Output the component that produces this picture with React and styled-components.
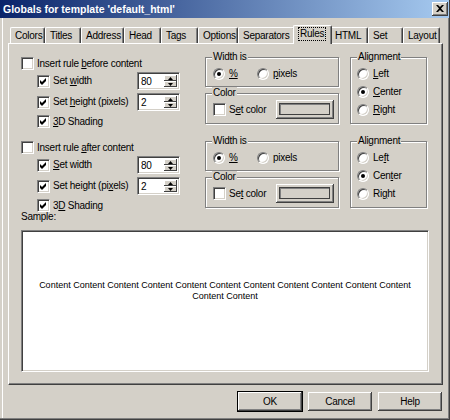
import styled, { createGlobalStyle } from 'styled-components'

const GlobalStyle = createGlobalStyle`
  html, body {
    margin: 0;
    padding: 0;
    background: #D4D0C8;
  }
`

const Window = styled.div`
  width: 450px;
  height: 420px;
  box-sizing: border-box;
  background: #D4D0C8;
  border-right: 1px solid #404040;
  border-bottom: 1px solid #404040;
  box-shadow: inset -1px -1px 0 #808080, inset 2px 0 0 #D4D0C8, inset 3px 0 0 #fff;
  display: flex;
  flex-direction: column;
  font-family: "Liberation Sans", Arial, sans-serif;
  font-size: 10px;
  letter-spacing: -0.25px;
  color: #000;
  overflow: hidden;
`

const TitleBar = styled.div`
  height: 18px;
  flex: none;
  display: flex;
  align-items: center;
  justify-content: space-between;
  padding: 0 1px 0 3px;
  background: linear-gradient(to right, #0A246A, #A6CAF0);
`

const Title = styled.span`
  color: #fff;
  font-weight: bold;
  font-size: 10.5px;
  letter-spacing: 0;
  white-space: nowrap;
`

const CloseButton = styled.div`
  width: 16px;
  height: 14px;
  box-sizing: border-box;
  background: #D4D0C8;
  box-shadow: inset -1px -1px #404040, inset 1px 1px #fff, inset -2px -2px #808080;
  display: flex;
  align-items: center;
  justify-content: center;
  padding-bottom: 1px;
`

const Body = styled.div`
  flex: 1;
  display: flex;
  flex-direction: column;
  padding: 7px 0 0 8px;
`

const TabStrip = styled.div`
  height: 18px;
  display: flex;
  align-items: flex-end;
  padding-left: 2px;
  position: relative;
  z-index: 1;
`

const Tab = styled.div`
  position: relative;
  z-index: ${p => (p.$active ? 2 : 1)};
  box-sizing: border-box;
  width: ${p => p.$width + (p.$active ? 4 : 0)}px;
  height: ${p => (p.$active ? 19 : 16)}px;
  margin: ${p => (p.$active ? '0 -2px -1px' : '0')};
  padding-left: ${p => (p.$active ? 5 : 4)}px;
  padding-bottom: ${p => (p.$active ? 2 : 0)}px;
  background: #D4D0C8;
  border-top: 1px solid #fff;
  border-left: 1px solid #fff;
  border-right: 1px solid #404040;
  border-radius: 2px 2px 0 0;
  box-shadow: inset -1px 0 0 #808080;
  display: flex;
  align-items: center;
  white-space: nowrap;
`

const FocusLabel = styled.span`
  outline: 1px dotted #000;
  padding: 0 1px;
  line-height: 12px;
`

const Panel = styled.div`
  box-sizing: border-box;
  width: 435px;
  height: 342px;
  border-top: 1px solid #fff;
  border-left: 1px solid #fff;
  border-right: 1px solid #404040;
  border-bottom: 1px solid #404040;
  box-shadow: inset -1px -1px #808080;
  padding: 13px 0 0 12px;
  display: flex;
  flex-direction: column;
`

const RuleSection = styled.div`
  display: flex;
  gap: 11px;
  height: 67px;
  margin-top: ${p => p.$top}px;
`

const LeftCol = styled.div`
  width: 173px;
  display: flex;
  flex-direction: column;
`

const MidCol = styled.div`
  width: 134px;
  display: flex;
  flex-direction: column;
  gap: 6px;
`

const SpinRow = styled.div`
  display: grid;
  grid-template-columns: 100px 43px;
  align-items: center;
  height: 18px;
  padding-left: 16px;
  margin-top: ${p => p.$top}px;
`

const IndentRow = styled.div`
  padding-left: 16px;
  margin-top: ${p => p.$top}px;
`

const OptionLabel = styled.label`
  display: flex;
  align-items: center;
  gap: ${p => p.$gap}px;
  height: 13px;
  white-space: nowrap;
  line-height: 12px;
`

const LabelText = styled.span`
  white-space: nowrap;
`

const CheckBox = styled.span`
  width: 13px;
  height: 13px;
  flex: none;
  box-sizing: border-box;
  background: #fff;
  border: 1px solid;
  border-color: #808080 #fff #fff #808080;
  box-shadow: inset 1px 1px #404040, inset -1px -1px #D4D0C8;
  display: flex;
  align-items: center;
  justify-content: center;
`

const RadioCircle = styled.span`
  width: 12px;
  height: 12px;
  flex: none;
  box-sizing: border-box;
  border-radius: 50%;
  background: #fff;
  border: 1px solid;
  border-color: #808080 #fff #fff #808080;
  box-shadow: inset 1px 1px #404040, inset -1px -1px #D4D0C8;
  display: flex;
  align-items: center;
  justify-content: center;
`

const RadioDot = styled.span`
  width: 4px;
  height: 4px;
  border-radius: 50%;
  background: #000;
`

const GroupBox = styled.div`
  position: relative;
  box-sizing: border-box;
  height: ${p => p.$height}px;
  width: ${p => p.$width}px;
  border: 1px solid #808080;
  box-shadow: inset 1px 1px #fff, 1px 1px #fff;
  padding: ${p => p.$pad};
`

const Legend = styled.span`
  position: absolute;
  top: -7px;
  left: 6px;
  padding: 0 1px;
  line-height: 12px;
  background: #D4D0C8;
  white-space: nowrap;
`

const RadioPair = styled.div`
  display: grid;
  grid-template-columns: 44px auto;
  align-items: center;
`

const ColorRow = styled.div`
  display: flex;
  align-items: center;
  justify-content: space-between;
`

const ColorButton = styled.div`
  width: 58px;
  height: 19px;
  box-sizing: border-box;
  padding: 3px 4px 4px 3px;
  background: #D4D0C8;
  box-shadow: inset -1px -1px #404040, inset 1px 1px #fff, inset -2px -2px #808080;
  display: flex;
`

const Swatch = styled.div`
  flex: 1;
  border: 1px solid #404040;
  box-shadow: inset 1px 1px #808080;
  background: #D4D0C8;
`

const AlignList = styled.div`
  display: flex;
  flex-direction: column;
`

const AlignItem = styled.div`
  height: 18px;
  display: flex;
  align-items: center;
`

const SpinBox = styled.div`
  width: 43px;
  height: 18px;
  box-sizing: border-box;
  display: flex;
  padding: 2px;
  background: #fff;
  border: 1px solid;
  border-color: #808080 #fff #fff #808080;
  box-shadow: inset 1px 1px #404040, inset -1px -1px #D4D0C8;
`

const SpinValue = styled.span`
  flex: 1;
  padding-left: 1px;
  line-height: 13px;
`

const SpinButtons = styled.div`
  width: 13px;
  display: flex;
  flex-direction: column;
`

const SpinArrow = styled.div`
  flex: 1;
  background: #D4D0C8;
  box-shadow: inset -1px -1px #404040, inset 1px 1px #fff;
  display: flex;
  align-items: center;
  justify-content: center;
`

const SampleLabel = styled.div`
  margin-top: 3px;
  line-height: 12px;
  height: 12px;
`

const SampleBox = styled.div`
  margin-top: 7px;
  width: 408px;
  height: 142px;
  box-sizing: border-box;
  background: #fff;
  border: 1px solid;
  border-color: #808080 #fff #fff #808080;
  box-shadow: inset 1px 1px #404040, inset -1px -1px #D4D0C8;
  padding-top: 49px;
`

const SampleText = styled.div`
  width: 384px;
  margin: 0 auto;
  text-align: center;
  font-size: 9px;
  line-height: 11px;
  letter-spacing: 0;
`

const ButtonRow = styled.div`
  width: 435px;
  margin-top: 6px;
  display: flex;
  justify-content: flex-end;
  gap: 4px;
`

const DialogButton = styled.div`
  width: 66px;
  height: 21px;
  box-sizing: border-box;
  border: 1px solid ${p => (p.$default ? '#000' : '#D4D0C8')};
  background: #D4D0C8;
  box-shadow: inset -1px -1px #404040, inset 1px 1px #fff, inset -2px -2px #808080;
  display: flex;
  align-items: center;
  justify-content: center;
  padding-bottom: 1px;
`

const tabs = [
  { name: 'Colors', width: 35 },
  { name: 'Titles', width: 36 },
  { name: 'Address', width: 43 },
  { name: 'Head', width: 37 },
  { name: 'Tags', width: 37 },
  { name: 'Options', width: 40 },
  { name: 'Separators', width: 57 },
  { name: 'Rules', width: 35, active: true },
  { name: 'HTML', width: 38 },
  { name: 'Set', width: 35 },
  { name: 'Layout', width: 37 },
]

const sections = [
  {
    top: 0,
    insert: <>Insert rule <u>b</u>efore content</>,
    width: <>Set <u>w</u>idth</>,
    height: <>Set <u>h</u>eight (pixels)</>,
    shading: <><u>3</u>D Shading</>,
    pixels: <><u>p</u>ixels</>,
    setColor: <>S<u>e</u>t color</>,
    align: [<><u>L</u>eft</>, <><u>C</u>enter</>, <><u>R</u>ight</>],
  },
  {
    top: 17,
    insert: <>Insert rule <u>a</u>fter content</>,
    width: <><u>S</u>et width</>,
    height: <>Set height (pi<u>x</u>els)</>,
    shading: <>3<u>D</u> Shading</>,
    pixels: <>pixels</>,
    setColor: <>Se<u>t</u> color</>,
    align: [<>Le<u>f</u>t</>, <>Cen<u>t</u>er</>, <>Ri<u>g</u>ht</>],
  },
]

function Check({ checked, children }) {
  return (
    <OptionLabel $gap={3}>
      <CheckBox>
        {checked && (
          <svg width="7" height="7" viewBox="0 0 7 7">
            <path d="M0 2L2 4L6 0V3L2 7L0 5Z" fill="#000" />
          </svg>
        )}
      </CheckBox>
      <LabelText>{children}</LabelText>
    </OptionLabel>
  )
}

function Radio({ checked, children }) {
  return (
    <OptionLabel $gap={4}>
      <RadioCircle>{checked && <RadioDot />}</RadioCircle>
      <LabelText>{children}</LabelText>
    </OptionLabel>
  )
}

function Spin({ value }) {
  return (
    <SpinBox>
      <SpinValue>{value}</SpinValue>
      <SpinButtons>
        <SpinArrow>
          <svg width="5" height="3" viewBox="0 0 5 3"><path d="M2.5 0L5 3H0Z" fill="#000" /></svg>
        </SpinArrow>
        <SpinArrow>
          <svg width="5" height="3" viewBox="0 0 5 3"><path d="M0 0H5L2.5 3Z" fill="#000" /></svg>
        </SpinArrow>
      </SpinButtons>
    </SpinBox>
  )
}

function Section({ s }) {
  return (
    <RuleSection $top={s.top}>
      <LeftCol>
        <Check>{s.insert}</Check>
        <SpinRow $top={2}>
          <Check checked>{s.width}</Check>
          <Spin value="80" />
        </SpinRow>
        <SpinRow $top={3}>
          <Check checked>{s.height}</Check>
          <Spin value="2" />
        </SpinRow>
        <IndentRow $top={4}>
          <Check checked>{s.shading}</Check>
        </IndentRow>
      </LeftCol>
      <MidCol>
        <GroupBox $height={30} $width={134} $pad="9px 0 0 7px">
          <Legend>Width is</Legend>
          <RadioPair>
            <Radio checked><u>%</u></Radio>
            <Radio>{s.pixels}</Radio>
          </RadioPair>
        </GroupBox>
        <GroupBox $height={31} $width={134} $pad="6px 4px 0 7px">
          <Legend>Color</Legend>
          <ColorRow>
            <Check>{s.setColor}</Check>
            <ColorButton><Swatch /></ColorButton>
          </ColorRow>
        </GroupBox>
      </MidCol>
      <GroupBox $height={67} $width={77} $pad="7px 0 0 6px">
        <Legend>Alignment</Legend>
        <AlignList>
          {s.align.map((label, i) => (
            <AlignItem key={i}>
              <Radio checked={i === 1}>{label}</Radio>
            </AlignItem>
          ))}
        </AlignList>
      </GroupBox>
    </RuleSection>
  )
}

export default function App() {
  return (
    <>
      <GlobalStyle />
      <Window>
        <TitleBar>
          <Title>Globals for template 'default_html'</Title>
          <CloseButton>
            <svg width="8" height="7" viewBox="0 0 8 7">
              <path d="M0 0H2L4 2L6 0H8L5 3.5L8 7H6L4 5L2 7H0L3 3.5Z" fill="#000" />
            </svg>
          </CloseButton>
        </TitleBar>
        <Body>
          <TabStrip>
            {tabs.map(t => (
              <Tab key={t.name} $width={t.width} $active={t.active}>
                {t.active ? <FocusLabel>{t.name}</FocusLabel> : t.name}
              </Tab>
            ))}
          </TabStrip>
          <Panel>
            {sections.map((s, i) => (
              <Section key={i} s={s} />
            ))}
            <SampleLabel>Sample:</SampleLabel>
            <SampleBox>
              <SampleText>
                {Array(13).fill('Content').join(' ')}
              </SampleText>
            </SampleBox>
          </Panel>
          <ButtonRow>
            <DialogButton $default>OK</DialogButton>
            <DialogButton>Cancel</DialogButton>
            <DialogButton>Help</DialogButton>
          </ButtonRow>
        </Body>
      </Window>
    </>
  )
}
